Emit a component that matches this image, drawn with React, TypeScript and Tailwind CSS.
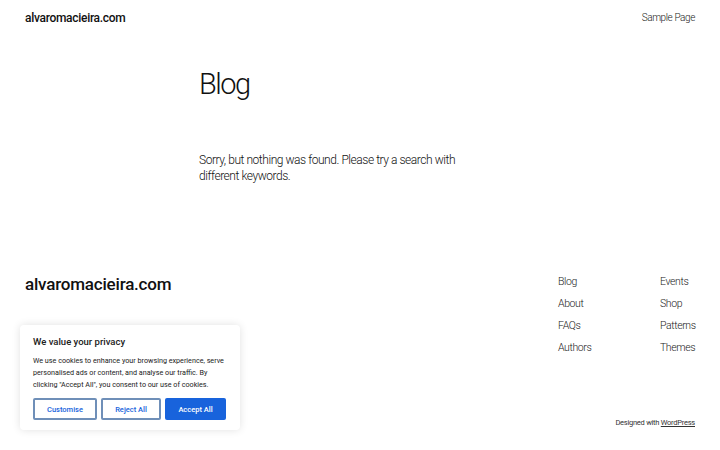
import React from "react";

export default function App() {
  const font = { fontFamily: "Roboto, 'Noto Sans', sans-serif" };
  return (
    <div className="relative w-[720px] h-[450px] bg-white overflow-hidden text-[#111]" style={font}>
      <header className="flex items-center justify-between px-[25px] pt-[1px] h-[34px]">
        <div className="text-[12px] font-medium tracking-[-0.3px]">alvaromacieira.com</div>
        <div className="text-[10px] text-[#222] font-light tracking-[-0.4px]">Sample Page</div>
      </header>
      <main className="pl-[199px]">
        <h1 className="mt-[33px] text-[29px] font-light leading-[34px] tracking-[-1.5px]">Blog</h1>
        <p className="mt-[51px] w-[268px] text-[12px] leading-[16px] text-[#111] font-light tracking-[-0.45px]">
          Sorry, but nothing was found. Please try a search with different keywords.
        </p>
      </main>
      <footer className="mt-[91px] flex justify-between pl-[25px] pr-[25px]">
        <div className="text-[17px] font-medium tracking-[-0.2px] leading-[22px] mt-[-2px]">alvaromacieira.com</div>
        <div className="flex flex-col items-end">
          <div className="flex mr-[-1px]">
            <ul className="flex flex-col gap-[9px] w-[102px] text-[10.5px] leading-[13px] text-[#222] font-light tracking-[-0.4px]">
              <li>Blog</li>
              <li>About</li>
              <li>FAQs</li>
              <li>Authors</li>
            </ul>
            <ul className="flex flex-col gap-[9px] w-[36px] text-[10.5px] leading-[13px] text-[#222] font-light tracking-[-0.4px]">
              <li>Events</li>
              <li>Shop</li>
              <li>Patterns</li>
              <li>Themes</li>
            </ul>
          </div>
          <div className="mt-[63px] text-[7.5px] text-[#333] tracking-[-0.25px]">
            Designed with <span className="underline">WordPress</span>
          </div>
        </div>
      </footer>
      <div className="absolute left-[20px] top-[325px] w-[220px] h-[105px] bg-white rounded-[4px] shadow-[0_0_8px_rgba(0,0,0,0.12)] px-[13px] pt-[10px]">
        <div className="text-[9.5px] font-medium text-[#212121]">We value your privacy</div>
        <p className="mt-[6px] text-[7.2px] leading-[12px] text-[#212121]">
          We use cookies to enhance your browsing experience, serve personalised ads or content, and analyse our traffic. By clicking "Accept All", you consent to our use of cookies.
        </p>
        <div className="mt-[7px] flex gap-[4px]">
          <button className="w-[64px] h-[22px] border-[2px] border-[#6f8fb8] rounded-[2px] text-[7.5px] text-[#1863dc] font-medium">Customise</button>
          <button className="w-[60px] h-[22px] border-[2px] border-[#6f8fb8] rounded-[2px] text-[7.5px] text-[#1863dc] font-medium">Reject All</button>
          <button className="w-[61px] h-[22px] bg-[#1863dc] rounded-[2px] text-[7.5px] text-white font-medium">Accept All</button>
        </div>
      </div>
    </div>
  );
}
